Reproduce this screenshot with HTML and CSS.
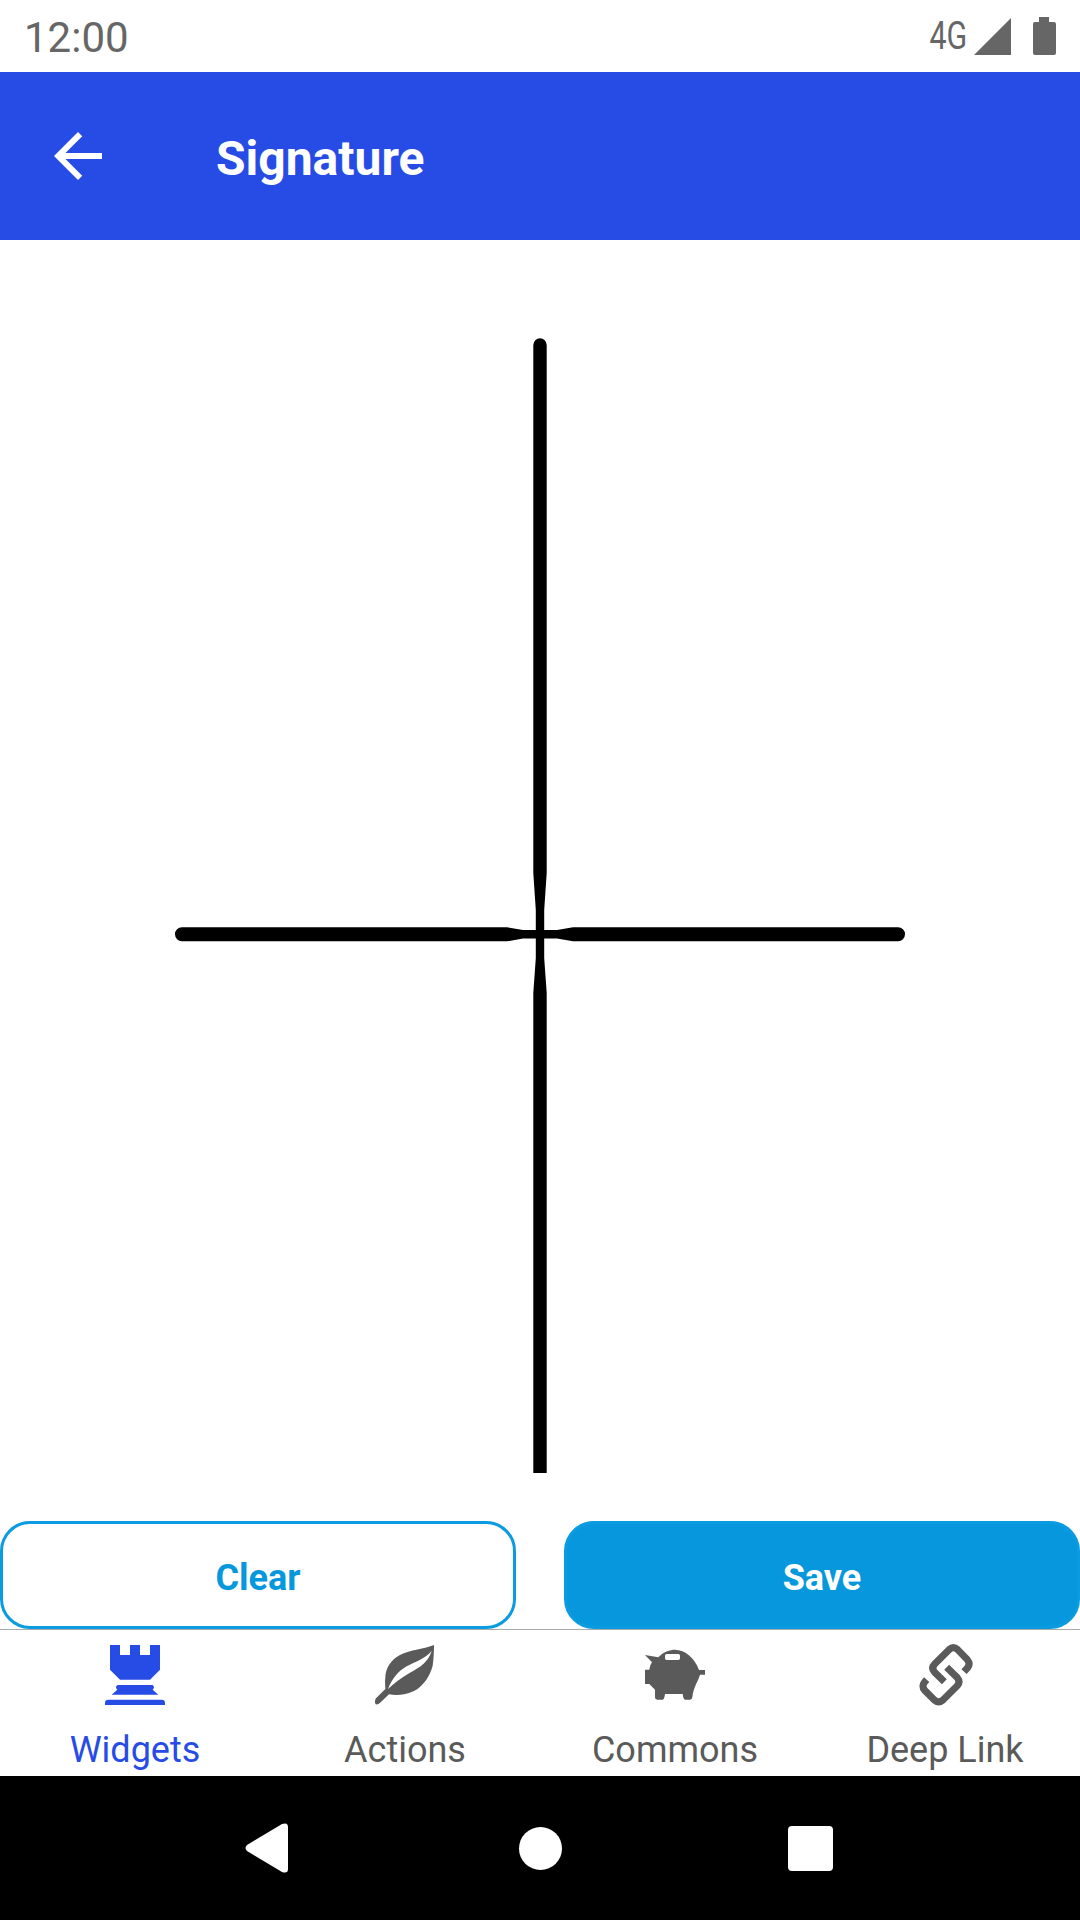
FILE: index.html
```html
<!DOCTYPE html>
<html lang="en">
<head>
    <meta charset="UTF-8">
    <meta name="viewport" content="width=device-width, initial-scale=1.0">
    <title>Signature</title>
    <link rel="stylesheet" href="styles.css">
</head>
<body>
    <div class="statusbar">
        <span class="clock">12:00</span>
        <div class="status-icons">
            <span class="network">4G</span>
            <svg class="signal" width="37" height="37" viewBox="0 0 37 37"><path d="M0 37 37 0v37z"/></svg>
            <svg class="battery" width="23" height="38" viewBox="0 0 23 38"><path d="M6 0h10v5h5q2 0 2 2v29q0 2-2 2H2q-2 0-2-2V7q0-2 2-2h4z"/></svg>
        </div>
    </div>

    <header class="appbar">
        <svg class="back-arrow" width="72" height="72" viewBox="0 0 24 24"><path d="M20 11H7.83l5.59-5.59L12 4l-8 8 8 8 1.41-1.41L7.83 13H20v-2z"/></svg>
        <h1 class="title">Signature</h1>
    </header>

    <main class="signature-pad">
        <svg class="strokes" viewBox="0 240 1080 1233">
            <path d="M533.3 345a6.7 6.7 0 0 1 13.4 0V873L544.2 910V958L546.7 993V1473H533.3V993L535.8 958V910L533.3 873Z"/>
            <path d="M182 927.3H507L523 930H557L573 927.3H898a7 7 0 0 1 0 14H573L557 938.6H523L507 941.3H182a7 7 0 0 1 0-14Z"/>
        </svg>
    </main>

    <div class="actions">
        <button class="btn btn-clear" type="button">Clear</button>
        <button class="btn btn-save" type="button">Save</button>
    </div>

    <nav class="tabs">
        <div class="tab tab-active">
            <svg class="tab-icon" viewBox="57 30 216 216">
                <path d="M90 48h30v30h30V48h30v30h30V48h30v74l-30 30h-90l-30-30z"/>
                <path d="M112 168h106q8 7 0 14l17 15H95l17-15q-8-7 0-14z"/>
                <path d="M85 212h160q10 0 10 10v6H75v-6q0-10 10-10z"/>
            </svg>
            <span class="tab-label">Widgets</span>
        </div>
        <div class="tab">
            <svg class="tab-icon" viewBox="27 30 216 216">
                <path fill-rule="evenodd" d="M222 48C195 60 150 62 120 78C92 92 76 120 76 145C74 160 76 172 76 180L48 208C44 214 44 222 47 226C54 227 58 224 62 220L87 196C110 200 138 198 162 186C192 170 210 140 218 110C221 90 222 68 222 48ZM215 65C198 88 165 98 140 112C115 126 96 150 84 180C102 162 125 145 150 131C180 114 205 100 215 65Z"/>
            </svg>
            <span class="tab-label">Actions</span>
        </div>
        <div class="tab">
            <svg class="tab-icon" viewBox="27 30 216 216">
                <path fill-rule="evenodd" d="M45 78L85 85C100 68 120 62 135 62C165 62 195 88 207 123H225V137H210C205 155 190 175 187 205Q186 212 180 212H165Q160 212 158 195H105Q103 212 98 212H82Q75 212 75 205V182L58 165H45V122H58C60 112 62 105 66 100ZM110 75Q105 75 105 80V88Q105 93 110 93H145Q150 93 150 88V80Q150 75 145 75Z"/>
            </svg>
            <span class="tab-label">Commons</span>
        </div>
        <div class="tab">
            <svg class="tab-icon link-icon" viewBox="27 30 216 216">
                <path d="M192 128L203 116Q212 104 202 92L173 62Q160 50 147 62L104 105Q92 117 104 130L133 158"/>
                <path d="M140 115L172 146Q182 158 172 170L129 213Q116 224 103 213L74 184Q64 172 73 160L80 152"/>
            </svg>
            <span class="tab-label">Deep Link</span>
        </div>
    </nav>

    <footer class="sysnav">
        <div class="sysbtn">
            <svg class="back-triangle" width="43" height="50" viewBox="0 0 43 50"><path d="M37 1 2 22q-3 3 0 6l35 21q6 2 6-3V4q0-5-6-3z"/></svg>
        </div>
        <div class="sysbtn"><span class="home-dot"></span></div>
        <div class="sysbtn"><span class="recent-box"></span></div>
    </footer>
</body>
</html>
```

FILE: styles.css
```css
html, body {
    margin: 0;
    padding: 0;
}

body {
    width: 1080px;
    height: 1920px;
    display: flex;
    flex-direction: column;
    background: #fff;
    font-family: Roboto, "Liberation Sans", sans-serif;
    overflow: hidden;
}

.statusbar {
    height: 72px;
    display: flex;
    align-items: center;
    justify-content: space-between;
    padding: 0 24px;
    color: #666;
}

.clock {
    font-size: 42px;
    line-height: 72px;
    padding-top: 3px;
}

.status-icons {
    display: flex;
    align-items: center;
}

.status-icons svg {
    fill: #666;
}

.network {
    font-size: 38px;
    line-height: 72px;
    transform: scaleX(0.8);
    transform-origin: right center;
    margin-right: 7px;
}

.signal {
    margin-right: 22px;
}

.appbar {
    height: 168px;
    display: flex;
    align-items: center;
    gap: 102px;
    padding-left: 42px;
    background: #274ce6;
    color: #fff;
}

.back-arrow {
    fill: #fff;
}

.title {
    margin: 0;
    padding-top: 5px;
    font-size: 48px;
    font-weight: 700;
}

.signature-pad {
    flex: 1;
    min-height: 0;
}

.strokes {
    display: block;
    width: 100%;
    height: 100%;
    fill: #000;
}

.actions {
    display: grid;
    grid-template-columns: 1fr 1fr;
    gap: 48px;
    padding-top: 48px;
}

.btn {
    height: 108px;
    padding-top: 7px;
    border: 3px solid #0a9be0;
    border-radius: 30px;
    font-family: inherit;
    font-size: 36px;
    font-weight: 700;
}

.btn-clear {
    background: #fff;
    color: #0797dc;
}

.btn-save {
    background: #0797dc;
    color: #fff;
}

.tabs {
    height: 146px;
    display: grid;
    grid-template-columns: repeat(4, 1fr);
    border-top: 1px solid #aaa;
    color: #5a5a5a;
}

.tab {
    display: flex;
    flex-direction: column;
    align-items: center;
    padding-top: 9px;
}

.tab-active {
    color: #274ce6;
}

.tab-icon {
    width: 72px;
    height: 72px;
    fill: currentColor;
}

.link-icon {
    fill: none;
    stroke: currentColor;
    stroke-width: 21;
}

.tab-label {
    font-size: 36px;
    line-height: 42px;
    margin-top: 18px;
}

.sysnav {
    height: 144px;
    display: flex;
    justify-content: center;
    align-items: center;
    background: #000;
}

.sysbtn {
    width: 270px;
    display: flex;
    justify-content: center;
    align-items: center;
    fill: #fff;
}

.back-triangle {
    margin-right: 7px;
}

.home-dot {
    width: 43px;
    height: 43px;
    border-radius: 50%;
    background: #fff;
}

.recent-box {
    width: 45px;
    height: 45px;
    border-radius: 4px;
    background: #fff;
}
```
